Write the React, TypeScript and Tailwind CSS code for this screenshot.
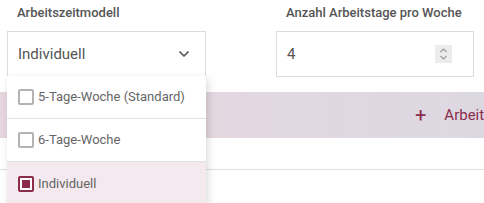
import { ChevronDown } from "lucide-react";

const options = [
  { label: "5-Tage-Woche (Standard)", checked: false },
  { label: "6-Tage-Woche", checked: false },
  { label: "Individuell", checked: true },
];

const Checkbox = ({ checked }: { checked: boolean }) =>
  checked ? (
    <span className="flex h-[16px] w-[16px] items-center justify-center rounded-[2px] border-2 border-[#8b2c4b] bg-white">
      <span className="h-[8px] w-[8px] bg-[#8b2c4b]" />
    </span>
  ) : (
    <span className="h-[16px] w-[16px] rounded-[2px] border-2 border-[#b3b3b3] bg-white" />
  );

export default function App() {
  return (
    <div
      className="relative h-[203px] w-[484px] overflow-hidden bg-white"
      style={{ fontFamily: "Roboto, 'Liberation Sans', sans-serif" }}
    >
      <div className="grid grid-cols-[199px_198px] gap-x-[70px] px-[7px] pt-[4px]">
        <div>
          <div className="mb-[9px] pl-[10px] text-[13px] leading-[18px] font-medium text-[#555]">
            Arbeitszeitmodell
          </div>
          <div className="flex h-[46px] items-center justify-between border border-[#dcdcdc] pr-[13px] pl-[10px]">
            <span className="text-[15px] text-[#555]">Individuell</span>
            <ChevronDown size={16} strokeWidth={2.6} className="text-[#555]" />
          </div>
        </div>
        <div>
          <div className="mb-[9px] pl-[10px] text-[13px] leading-[18px] font-medium text-[#555]">
            Anzahl Arbeitstage pro Woche
          </div>
          <div className="flex h-[46px] items-center justify-between border border-[#dcdcdc] pr-[21px] pl-[10px]">
            <span className="text-[15px] text-[#555]">4</span>
            <span className="flex h-[18px] w-[17px] flex-col items-center justify-center bg-[#ececec]">
              <svg width="9" height="14" viewBox="0 0 9 14" fill="none" stroke="#9a9a9a" strokeWidth="1.2">
                <path d="M1.5 5 L4.5 2 L7.5 5" />
                <path d="M1.5 9 L4.5 12 L7.5 9" />
              </svg>
            </span>
          </div>
        </div>
      </div>

      <div className="mt-[15px] flex h-[46px] items-center overflow-hidden bg-gradient-to-r from-[#e8d6de] to-[#dcd8e2] pl-[415px] whitespace-nowrap text-[15px] text-[#8b2c4b]">
        <span className="mr-[18px] text-[20px] leading-none">+</span>
        <span>Arbeitszeit hinzufügen</span>
      </div>

      <div className="mt-[31px] border-t border-[#e0e0e0]" />

      <div className="absolute top-[76px] left-[7px] w-[199px] bg-white shadow-[2px_3px_8px_rgba(0,0,0,0.15)]">
        {options.map((o, i) => (
          <div
            key={o.label}
            className={`flex h-[43px] items-center gap-[4px] pl-[11px] text-[13px] text-[#666] ${
              i < options.length - 1 ? "border-b border-[#e3e3e3]" : ""
            } ${o.checked ? "bg-[#f4e9ee]" : ""}`}
          >
            <Checkbox checked={o.checked} />
            <span>{o.label}</span>
          </div>
        ))}
      </div>
    </div>
  );
}
